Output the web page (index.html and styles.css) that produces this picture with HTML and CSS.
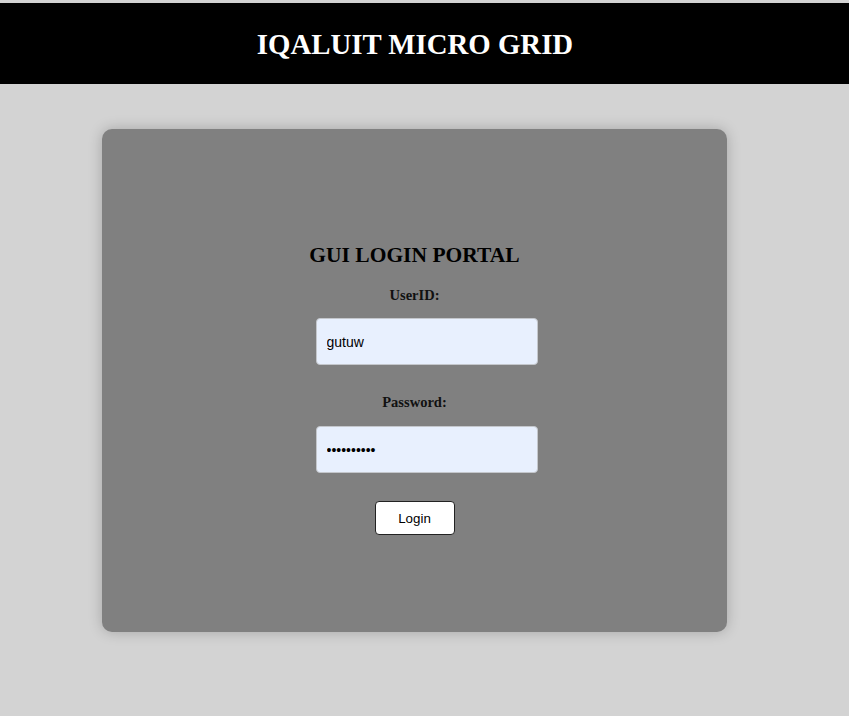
FILE: index.html
```html
<!DOCTYPE html>
<html>
<head>
<meta charset="utf-8">
<title>Iqaluit Micro Grid</title>
<link rel="stylesheet" href="styles.css">
</head>
<body>
<header class="topbar">
  <h1 class="site-title">IQALUIT MICRO GRID</h1>
</header>
<main class="page">
  <section class="card">
    <h2 class="card-title">GUI LOGIN PORTAL</h2>
    <form class="login-form">
      <label class="field-label" for="uid">UserID:</label>
      <input class="field-input" id="uid" type="text" value="gutuw">
      <label class="field-label field-label--second" for="pwd">Password:</label>
      <input class="field-input field-input--pwd" id="pwd" type="password" value="gutuw12345">
      <button class="login-btn" type="button">Login</button>
    </form>
  </section>
</main>
</body>
</html>
```

FILE: styles.css
```css
html, body {
  margin: 0;
  padding: 0;
}
body {
  background: #d3d3d3;
  font-family: "Liberation Serif", "Times New Roman", serif;
  min-height: 716px;
}
.topbar {
  margin-top: 3px;
  height: 81px;
  background: #000;
  display: flex;
  align-items: center;
  justify-content: center;
  padding-right: 19px;
}
.site-title {
  margin: 0;
  color: #fff;
  font-size: 28.8px;
  font-weight: bold;
  line-height: 32px;
}
.page {
  padding-top: 45px;
  padding-left: 102px;
}
.card {
  box-sizing: border-box;
  width: 625px;
  height: 503px;
  background: #808080;
  border-radius: 10px;
  box-shadow: 0 0 14px rgba(0, 0, 0, 0.22);
  padding-top: 114px;
  display: flex;
  flex-direction: column;
  align-items: center;
}
.card-title {
  margin: 0;
  font-size: 21.5px;
  line-height: 24px;
  font-weight: bold;
  color: #000;
}
.login-form {
  display: flex;
  flex-direction: column;
  align-items: center;
  margin-top: 20px;
}
.field-label {
  display: block;
  font-size: 14.5px;
  line-height: 17px;
  font-weight: bold;
  color: #111;
  margin-bottom: 14px;
}
.field-label--second {
  margin-top: 29px;
  margin-bottom: 15px;
}
.field-input {
  box-sizing: border-box;
  width: 222px;
  height: 47px;
  margin-left: 24px;
  border: 1px solid #c4c7cc;
  border-radius: 4px;
  background: #e8f0fe;
  padding: 0 10px;
  font-family: "Liberation Sans", Arial, sans-serif;
  font-size: 14px;
  color: #000;
  outline: none;
}
.login-btn {
  margin-top: 28px;
  box-sizing: border-box;
  width: 80px;
  height: 34px;
  background: #fff;
  border: 1px solid #222;
  border-radius: 4px;
  font-family: "Liberation Sans", Arial, sans-serif;
  font-size: 13.333px;
  color: #000;
  padding: 0;
}
```
